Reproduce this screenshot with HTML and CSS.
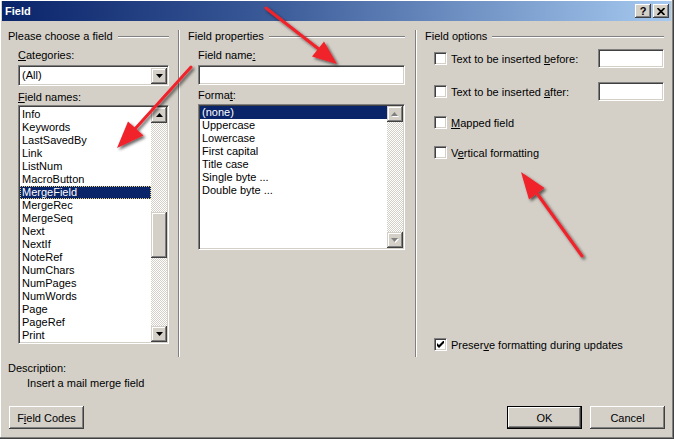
FILE: index.html
```html
<!DOCTYPE html>
<html>
<head>
<meta charset="utf-8">
<title>Field</title>
<link rel="stylesheet" href="styles.css">
</head>
<body>
<div class="window">
  <div class="titlebar">
    <span class="title">Field</span>
    <div class="tb-buttons">
      <span class="tbtn help">?</span>
      <span class="tbtn"><svg width="8" height="7" viewBox="0 0 8 7"><path d="M0.5 0 L7.5 7 M7.5 0 L0.5 7" stroke="#000" stroke-width="1.7"/></svg></span>
    </div>
  </div>

  <div class="content">
    <div class="columns">
      <section class="col col-left">
        <div class="gtitle"><span>Please choose a field</span><i class="etch"></i></div>
        <div class="inner">
          <div class="lbl lbl-cat"><u>C</u>ategories:</div>
          <div class="combo sunken">
            <span class="combo-text">(All)</span>
            <span class="sbbtn combo-btn"><svg width="7" height="4" viewBox="0 0 7 4"><polygon points="0,0 7,0 3.5,4" fill="#000"/></svg></span>
          </div>
          <div class="lbl lbl-names"><u>F</u>ield names:</div>
          <div class="listbox sunken list-names">
            <div class="items pad1">
              <div class="item">Info</div>
              <div class="item">Keywords</div>
              <div class="item">LastSavedBy</div>
              <div class="item">Link</div>
              <div class="item">ListNum</div>
              <div class="item">MacroButton</div>
              <div class="item sel focus">MergeField</div>
              <div class="item">MergeRec</div>
              <div class="item">MergeSeq</div>
              <div class="item">Next</div>
              <div class="item">NextIf</div>
              <div class="item">NoteRef</div>
              <div class="item">NumChars</div>
              <div class="item">NumPages</div>
              <div class="item">NumWords</div>
              <div class="item">Page</div>
              <div class="item">PageRef</div>
              <div class="item">Print</div>
            </div>
            <div class="sb">
              <span class="sbbtn"><svg width="7" height="4" viewBox="0 0 7 4"><polygon points="0,4 7,4 3.5,0" fill="#000"/></svg></span>
              <div class="track"><div class="thumb"></div></div>
              <span class="sbbtn"><svg width="7" height="4" viewBox="0 0 7 4"><polygon points="0,0 7,0 3.5,4" fill="#000"/></svg></span>
            </div>
          </div>
        </div>
      </section>

      <div class="vsep"></div>

      <section class="col col-mid">
        <div class="gtitle"><span>Field properties</span><i class="etch"></i></div>
        <div class="inner">
          <div class="lbl lbl-fname">Field name<u>:</u></div>
          <div class="tbox sunken fname"></div>
          <div class="lbl lbl-format">Forma<u>t</u>:</div>
          <div class="listbox sunken list-format">
            <div class="items">
              <div class="item sel">(none)</div>
              <div class="item">Uppercase</div>
              <div class="item">Lowercase</div>
              <div class="item">First capital</div>
              <div class="item">Title case</div>
              <div class="item">Single byte ...</div>
              <div class="item">Double byte ...</div>
            </div>
            <div class="sb">
              <span class="sbbtn"><svg width="8" height="5" viewBox="0 0 8 5"><polygon points="1,5 8,5 4.5,1" fill="#fff"/><polygon points="0,4 7,4 3.5,0" fill="#808080"/></svg></span>
              <div class="track"></div>
              <span class="sbbtn"><svg width="8" height="5" viewBox="0 0 8 5"><polygon points="1,1 8,1 4.5,5" fill="#fff"/><polygon points="0,0 7,0 3.5,4" fill="#808080"/></svg></span>
            </div>
          </div>
        </div>
      </section>

      <div class="vsep"></div>

      <section class="col col-right">
        <div class="gtitle"><span>Field options</span><i class="etch"></i></div>
        <div class="opt opt1">
          <span class="cb sunken"></span>
          <span>Text to be inserted <u>b</u>efore:</span>
          <span class="tbox sunken optbox"></span>
        </div>
        <div class="opt opt2">
          <span class="cb sunken"></span>
          <span>Text to be inserted <u>a</u>fter:</span>
          <span class="tbox sunken optbox"></span>
        </div>
        <div class="opt opt3">
          <span class="cb sunken"></span>
          <span><u>M</u>apped field</span>
        </div>
        <div class="opt opt4">
          <span class="cb sunken"></span>
          <span>V<u>e</u>rtical formatting</span>
        </div>
        <div class="opt opt-preserve">
          <span class="cb sunken checked"><svg width="7" height="7" viewBox="0 0 7 7"><path d="M0 2 L2 4 L7 -1 L7 2 L2 7 L0 5 Z" fill="#000"/></svg></span>
          <span>Preser<u>v</u>e formatting during updates</span>
        </div>
      </section>
    </div>

    <div class="desc">
      <div class="desc-title">Description:</div>
      <div class="desc-text">Insert a mail merge field</div>
    </div>

    <div class="buttons">
      <span class="btn">F<u>i</u>eld Codes</span>
      <span class="btn default">OK</span>
      <span class="btn">Cancel</span>
    </div>
  </div>

  <svg class="annot" width="674" height="439" viewBox="0 0 674 439">
    <defs>
      <filter id="sh" x="-20%" y="-20%" width="140%" height="140%">
        <feDropShadow dx="2" dy="2" stdDeviation="1.4" flood-color="#000" flood-opacity="0.6"/>
      </filter>
    </defs>
    <g filter="url(#sh)" fill="#f0222b" stroke="#f0222b">
      <line x1="266" y1="8" x2="320" y2="50" stroke-width="3" stroke-linecap="round"/>
      <polygon points="337,64 312,56.5 324,41.5" stroke="none"/>
      <line x1="191" y1="67" x2="134" y2="130" stroke-width="3" stroke-linecap="round"/>
      <polygon points="117,148 128,121.5 143.5,135.5" stroke="none"/>
      <line x1="582" y1="256" x2="536" y2="192" stroke-width="3" stroke-linecap="round"/>
      <polygon points="521,172 544.5,188 529,199.5" stroke="none"/>
    </g>
  </svg>
</div>
</body>
</html>
```

FILE: styles.css
```css
html, body {
  margin: 0;
  padding: 0;
  background: #d4d0c8;
}

body {
  font-family: "Liberation Sans", Arial, sans-serif;
  font-size: 11px;
  color: #000;
}

.window {
  position: relative;
  width: 674px;
  height: 439px;
  box-sizing: border-box;
  padding: 1px 3px 3px 2px;
  background: #d4d0c8;
  display: flex;
  flex-direction: column;
  box-shadow: inset -1px -1px #404040, inset -2px -2px #808080, inset 1px 1px #fff;
  overflow: hidden;
}

/* Title bar */
.titlebar {
  flex: none;
  height: 20px;
  display: flex;
  align-items: center;
  padding: 0 2px 0 3px;
  background: linear-gradient(90deg, #0a246a 0%, #3a5a98 40%, #a6caf0 100%);
  color: #fff;
}

.title {
  font-weight: bold;
  font-size: 11px;
  line-height: 13px;
}

.tb-buttons {
  margin-left: auto;
  display: flex;
  gap: 2px;
}

.tbtn {
  width: 16px;
  height: 14px;
  box-sizing: border-box;
  background: #d4d0c8;
  box-shadow: inset -1px -1px #404040, inset 1px 1px #fff, inset -2px -2px #808080;
  display: flex;
  align-items: center;
  justify-content: center;
  color: #000;
}

.tbtn.help {
  font-weight: bold;
  font-size: 11px;
  line-height: 12px;
}

/* Content */
.content {
  flex: 1;
  display: flex;
  flex-direction: column;
  padding: 9px 0 7px 0;
}

.columns {
  display: grid;
  grid-template-columns: 176px 2px 235px 2px 254px;
  height: 327px;
}

.vsep {
  box-sizing: border-box;
  border-left: 1px solid #808080;
  border-right: 1px solid #fff;
}

.col {
  display: flex;
  flex-direction: column;
  min-width: 0;
}

.col-left { padding-left: 6px; }
.col-mid { padding-left: 8px; }
.col-right { padding-left: 8px; }

.gtitle {
  display: flex;
  align-items: center;
  height: 13px;
  line-height: 13px;
  white-space: nowrap;
}

.etch {
  flex: 1;
  height: 0;
  border-top: 1px solid #808080;
  border-bottom: 1px solid #fff;
  margin-left: 5px;
}

.col-left .gtitle { margin-right: 9px; }
.col-mid .gtitle { margin-right: 10px; }
.col-right .gtitle { margin-right: 7px; }

.inner {
  margin-left: 10px;
  display: flex;
  flex-direction: column;
}

.col-left .inner { width: 151px; }
.col-mid .inner { width: 207px; }

.lbl {
  height: 13px;
  line-height: 13px;
  white-space: nowrap;
}

.lbl-cat { margin-top: 6px; }
.lbl-names { margin-top: 5px; }
.lbl-fname { margin-top: 6px; }
.lbl-format { margin-top: 4px; }

/* Sunken controls */
.sunken {
  box-sizing: border-box;
  background: #fff;
  border: 1px solid;
  border-color: #808080 #fff #fff #808080;
  box-shadow: inset 1px 1px #404040, inset -1px -1px #d4d0c8;
}

.combo {
  margin-top: 3px;
  height: 21px;
  display: flex;
  align-items: center;
  padding: 2px 1px 2px 3px;
}

.combo-text {
  flex: 1;
  line-height: 13px;
}

.combo-btn {
  height: 17px;
}

.tbox {
  display: block;
}

.fname {
  margin-top: 3px;
  height: 20px;
}

/* List boxes */
.listbox {
  display: flex;
  padding: 1px;
}

.list-names {
  margin-top: 1px;
  height: 239px;
}

.list-format {
  margin-top: 2px;
  height: 146px;
}

.items {
  flex: 1;
  min-width: 0;
  overflow: hidden;
}

.items.pad1 { padding-top: 1px; }

.item {
  height: 13px;
  line-height: 13px;
  padding-left: 2px;
  white-space: nowrap;
}

.item.sel {
  background: #0a246a;
  color: #fff;
}

.item.focus {
  outline: 1px dotted #e8cf7a;
  outline-offset: -1px;
}

.sb {
  width: 16px;
  flex: none;
  display: flex;
  flex-direction: column;
}

.sbbtn {
  width: 16px;
  height: 16px;
  flex: none;
  box-sizing: border-box;
  background: #d4d0c8;
  box-shadow: inset -1px -1px #404040, inset 1px 1px #d4d0c8, inset -2px -2px #808080, inset 2px 2px #fff;
  display: flex;
  align-items: center;
  justify-content: center;
}

.track {
  flex: 1;
  background: repeating-conic-gradient(#fff 0 25%, #d4d0c8 0 50%) 0 0 / 2px 2px;
}

.thumb {
  margin-top: 89px;
  height: 46px;
  background: #d4d0c8;
  box-shadow: inset -1px -1px #404040, inset 1px 1px #d4d0c8, inset -2px -2px #808080, inset 2px 2px #fff;
}

/* Options */
.opt {
  display: flex;
  align-items: center;
  height: 19px;
  padding-left: 9px;
  white-space: nowrap;
}

.opt1 { margin-top: 6px; }
.opt2 { margin-top: 14px; }
.opt3 { margin-top: 12px; }
.opt4 { margin-top: 11px; }
.opt-preserve { margin-top: auto; margin-bottom: 3px; }

.cb {
  width: 13px;
  height: 13px;
  flex: none;
  margin-right: 4px;
  display: flex;
  align-items: center;
  justify-content: center;
}

.optbox {
  margin-left: auto;
  margin-right: 7px;
  width: 66px;
  height: 19px;
}

/* Description */
.desc {
  margin-top: 5px;
  padding-left: 6px;
  line-height: 13px;
}

.desc-text {
  margin-top: 2px;
  padding-left: 19px;
}

/* Buttons */
.buttons {
  margin-top: 16px;
  display: flex;
  padding: 0 6px 0 7px;
  gap: 8px;
}

.btn {
  width: 75px;
  height: 23px;
  box-sizing: border-box;
  display: flex;
  align-items: center;
  justify-content: center;
  background: #d4d0c8;
  box-shadow: inset -1px -1px #404040, inset 1px 1px #fff, inset -2px -2px #808080;
}

.btn.default {
  margin-left: auto;
  border: 1px solid #000;
  box-shadow: inset -1px -1px #404040, inset 1px 1px #fff, inset -2px -2px #808080;
}

/* Annotation arrows */
.annot {
  position: absolute;
  left: 0;
  top: 0;
  pointer-events: none;
}
```
